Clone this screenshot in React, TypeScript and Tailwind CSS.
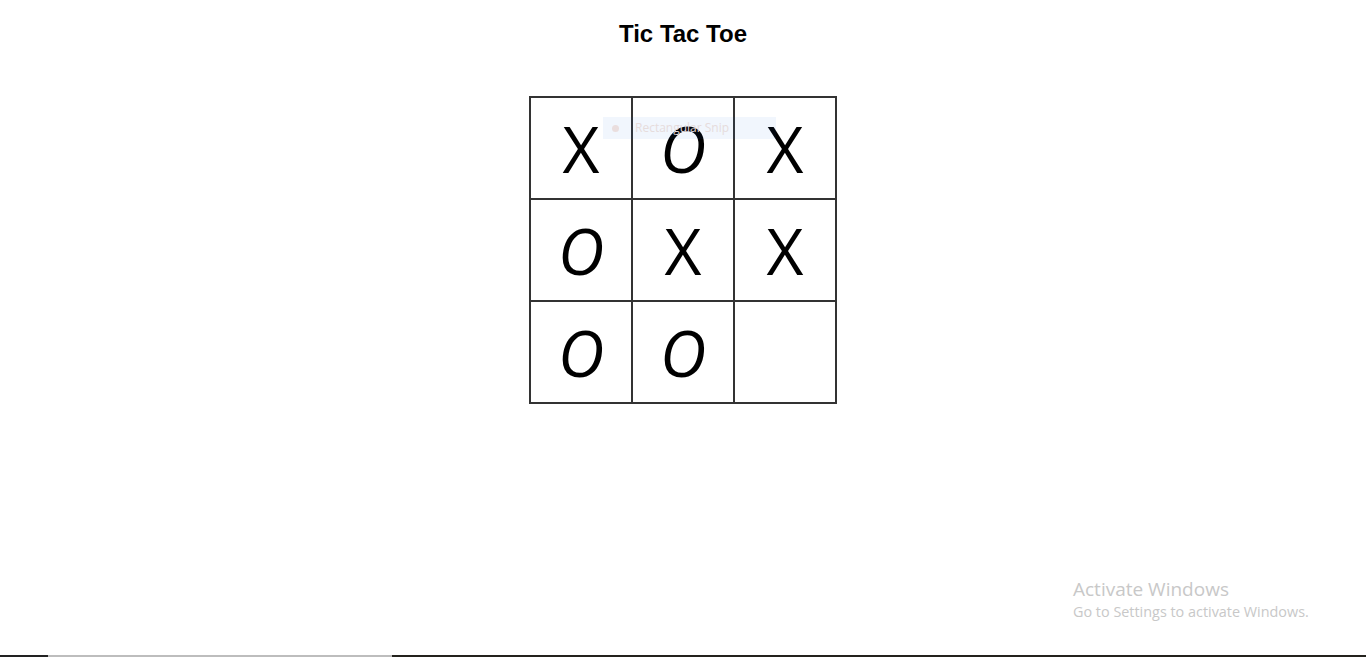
import React from 'react';

const board = ['X', 'O', 'X', 'O', 'X', 'X', 'O', 'O', ''];

function Cell({ value }: { value: string }) {
  return (
    <div className="w-[100px] h-[100px] bg-white flex items-center justify-center pt-[2px]">
      {value === 'O' ? (
        <span className="text-[64px] leading-none italic font-medium text-black" style={{ fontFamily: '"Open Sans", sans-serif' }}>
          O
        </span>
      ) : (
        <span className="text-[64px] leading-none font-medium text-black" style={{ fontFamily: '"Open Sans", sans-serif' }}>
          {value}
        </span>
      )}
    </div>
  );
}

export default function App() {
  return (
    <div className="relative w-full h-[657px] bg-white overflow-hidden font-['Liberation_Sans',Arial,sans-serif]">
      <div className="flex flex-col items-center pt-[18px]">
        <h1 className="text-2xl font-bold text-black">Tic Tac Toe</h1>

        <div className="relative mt-[46px]">
          <div className="grid grid-cols-3 gap-[2px] p-[2px] bg-[#333333]">
            {board.map((v, i) => (
              <Cell key={i} value={v} />
            ))}
          </div>

          {/* ghost of the snipping tool toolbar */}
          <div className="absolute left-[74px] top-[21px] w-[173px] h-[22px] bg-[#0a6ed8]/[0.06] flex items-center">
            <span className="ml-[9px] w-[7px] h-[7px] rounded-full bg-[#eadede]" />
            <span className="ml-[16px] text-[12px] text-[#e6dcdc] font-['Open_Sans',sans-serif]">Rectangular Snip</span>
          </div>
        </div>
      </div>

      {/* windows activation watermark */}
      <div className="absolute left-[1073px] top-[577px] text-[#c8c8c8] font-['Open_Sans',sans-serif]">
        <div className="text-[19px] leading-[24px]">Activate Windows</div>
        <div className="text-[14.4px] leading-[22px]">Go to Settings to activate Windows.</div>
      </div>

      {/* taskbar edge */}
      <div className="absolute left-0 bottom-0 w-full h-[2px] flex">
        <div className="w-[48px] bg-[#222222]" />
        <div className="w-[344px] bg-[#bdbdbd]" />
        <div className="flex-1 bg-[#24221d]" />
      </div>
    </div>
  );
}
